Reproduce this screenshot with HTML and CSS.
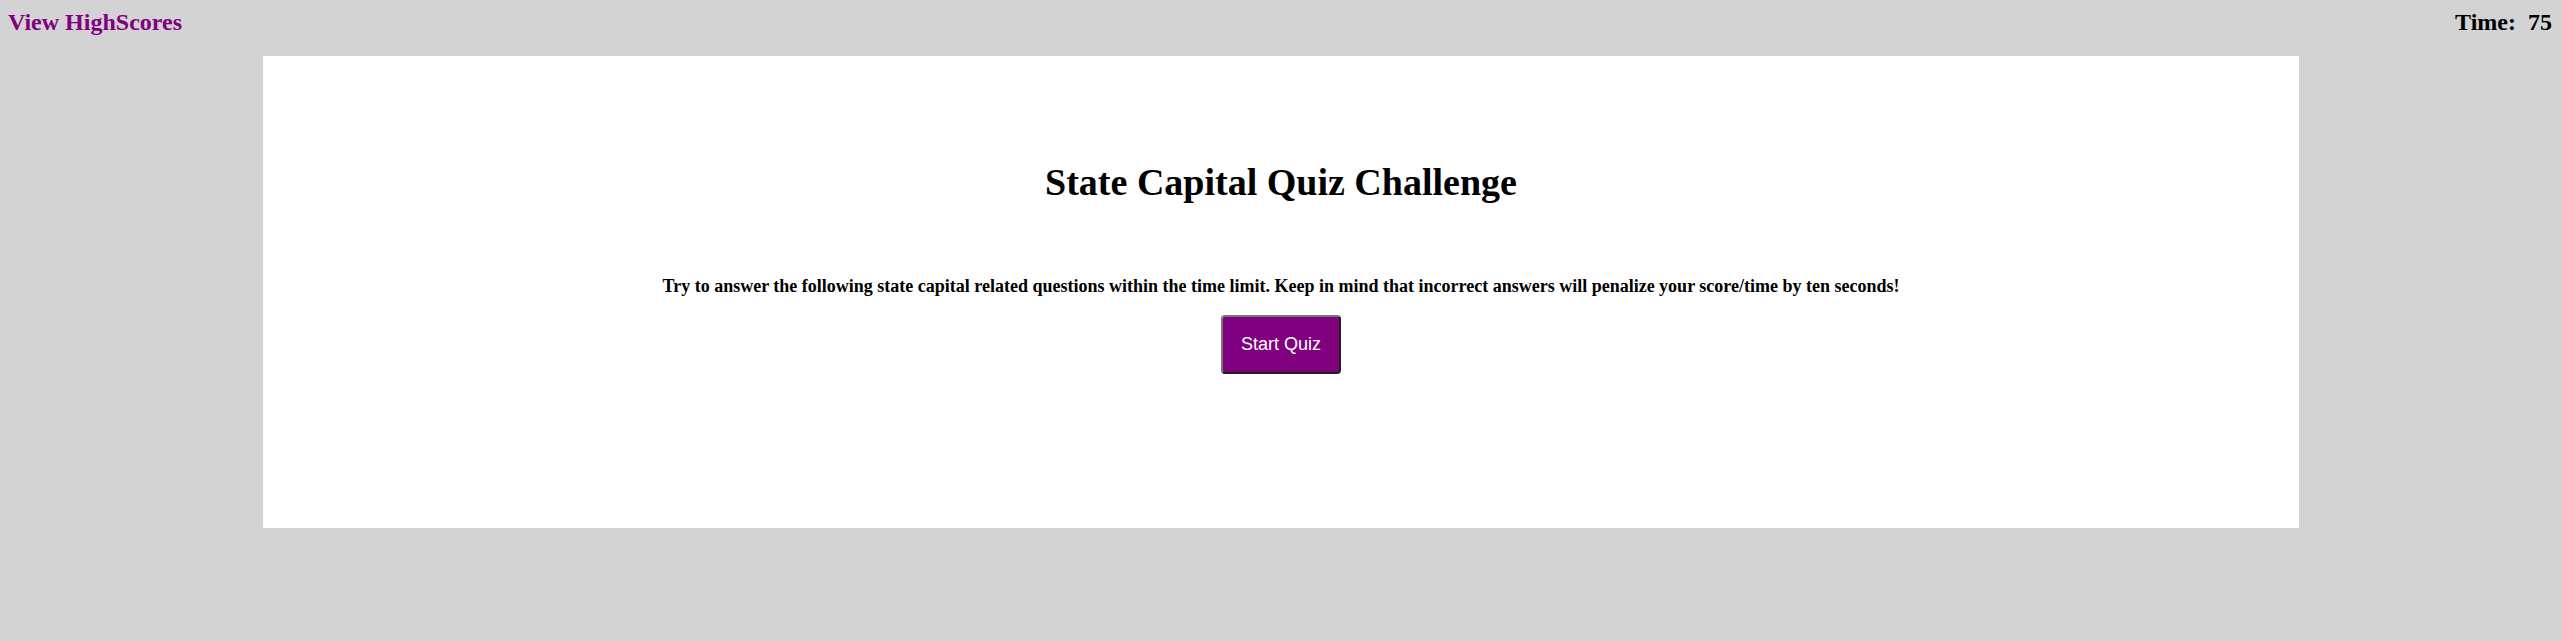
FILE: index.html
```html
<!DOCTYPE html>
<html lang="en">
<head>
<meta charset="utf-8">
<title>State Capital Quiz Challenge</title>
<link rel="stylesheet" href="styles.css">
</head>
<body>
  <header class="topbar">
    <a class="highscores" href="#">View HighScores</a>
    <div class="timer">Time:<span class="time-value">75</span></div>
  </header>
  <main class="card">
    <h1 class="title">State Capital Quiz Challenge</h1>
    <p class="intro">Try to answer the following state capital related questions within the time limit. Keep in mind that incorrect answers will penalize your score/time by ten seconds!</p>
    <button class="start-btn" type="button">Start Quiz</button>
  </main>
</body>
</html>
```
FILE: styles.css
```css
html, body {
  background: #d3d3d3;
}
body {
  margin: 8px;
  font-family: "Liberation Serif", "Times New Roman", serif;
  color: #000;
}
.topbar {
  display: flex;
  justify-content: space-between;
  align-items: flex-start;
  height: 48px;
  padding-top: 2px;
  box-sizing: border-box;
  font-size: 24px;
  font-weight: bold;
  line-height: 1;
}
.highscores {
  color: #800080;
  text-decoration: none;
}
.timer {
  padding-right: 2px;
}
.time-value {
  margin-left: 12px;
}
.card {
  width: 80%;
  height: 472px;
  margin: 0 auto;
  background: #fff;
  box-sizing: border-box;
  padding-top: 107px;
  display: flex;
  flex-direction: column;
  align-items: center;
  text-align: center;
}
.title {
  margin: 0;
  font-size: 38px;
  line-height: 1;
  font-weight: bold;
}
.intro {
  margin: 76px 0 0;
  font-size: 18px;
  line-height: 1;
  font-weight: bold;
}
.start-btn {
  margin-top: 20px;
  background: #800080;
  color: #fff;
  font-family: "Liberation Sans", Arial, sans-serif;
  font-size: 18px;
  line-height: 21px;
  padding: 17px 18px;
  border: 2px outset #767676;
  border-radius: 4px;
  cursor: pointer;
}
```
